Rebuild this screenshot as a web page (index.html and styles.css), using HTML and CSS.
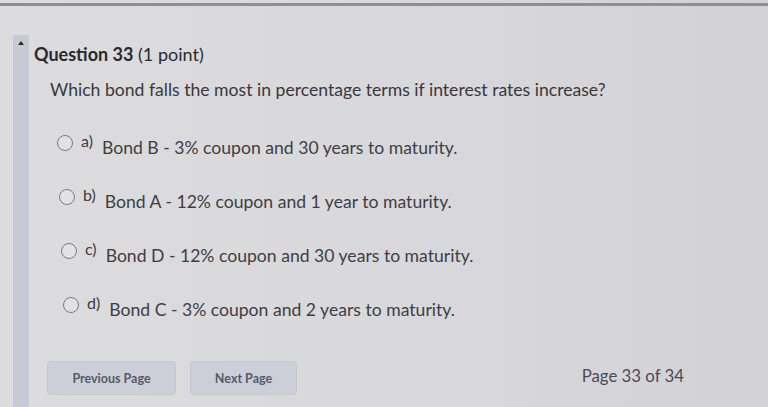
FILE: index.html
```html
<!DOCTYPE html>
<html>
<head>
<meta charset="utf-8">
<link rel="stylesheet" href="styles.css">
</head>
<body>
<div class="screen">
  <div class="topline"></div>
  <div class="main">
    <div class="sidebar"><span class="caret"></span></div>
    <div class="content">
      <h1 class="title"><b>Question 33</b> (1 point)</h1>
      <p class="question">Which bond falls the most in percentage terms if interest rates increase?</p>
      <ul class="options">
        <li class="option"><span class="radio"></span><span class="letter">a)</span><span class="text">Bond B - 3% coupon and 30 years to maturity.</span></li>
        <li class="option"><span class="radio"></span><span class="letter">b)</span><span class="text">Bond A - 12% coupon and 1 year to maturity.</span></li>
        <li class="option"><span class="radio"></span><span class="letter">c)</span><span class="text">Bond D - 12% coupon and 30 years to maturity.</span></li>
        <li class="option"><span class="radio"></span><span class="letter">d)</span><span class="text">Bond C - 3% coupon and 2 years to maturity.</span></li>
      </ul>
      <div class="footer">
        <button class="btn btn-prev">Previous Page</button>
        <button class="btn btn-next">Next Page</button>
        <span class="pager">Page 33 of 34</span>
      </div>
    </div>
  </div>
</div>
</body>
</html>
```
FILE: styles.css
```css
html, body {
  margin: 0;
  padding: 0;
}
body {
  width: 768px;
  height: 407px;
  overflow: hidden;
  background: #d9d9dc;
  font-family: Lato, "Open Sans", sans-serif;
  color: #3a3a3e;
}
.screen {
  height: 407px;
  display: flex;
  flex-direction: column;
  background: linear-gradient(90deg, #dcdcde 0%, #d8d8dc 60%, #d2d2d6 100%);
}
.topline {
  height: 3px;
  margin-top: 3px;
  background: #8e8e93;
  flex: none;
}
.main {
  flex: 1;
  display: flex;
  padding-top: 29px;
}
.sidebar {
  width: 16px;
  margin-left: 13px;
  background: #c8c9d2;
  display: flex;
  justify-content: center;
  padding-top: 6px;
  box-sizing: border-box;
  flex: none;
}
.caret {
  width: 0;
  height: 0;
  border-left: 3px solid transparent;
  border-right: 3px solid transparent;
  border-bottom: 4px solid #2a2a30;
}
.content {
  flex: 1;
  padding-left: 5px;
  padding-right: 40px;
  display: flex;
  flex-direction: column;
}
.title {
  margin: 8px 0 0 0;
  font-size: 18px;
  font-weight: 400;
  color: #2a2a2e;
  line-height: 22px;
}
.title b {
  font-weight: 700;
}
.question {
  margin: 14px 0 0 16px;
  font-size: 17.6px;
  line-height: 22px;
  color: #38383c;
}
.options {
  list-style: none;
  margin: 31px 0 0 23px;
  padding: 0;
  display: flex;
  flex-direction: column;
  gap: 32px;
}
.option {
  display: flex;
  align-items: center;
  height: 22px;
}
.option:nth-child(2) { padding-left: 2px; }
.option:nth-child(3) { padding-left: 4px; }
.option:nth-child(4) { padding-left: 6px; }
.radio {
  width: 14px;
  height: 14px;
  border: 1.7px solid #7a7a80;
  border-radius: 50%;
  background: #e2e2e4;
  flex: none;
}
.letter {
  font-size: 16px;
  margin-left: 8px;
  position: relative;
  top: -3px;
  color: #3c3c40;
}
.text {
  font-size: 17.6px;
  margin-left: 9px;
  position: relative;
  top: 4px;
  color: #3e3e42;
}
.footer {
  margin-top: auto;
  margin-bottom: 12px;
  margin-left: 13px;
  display: flex;
  align-items: center;
  gap: 14px;
}
.btn {
  height: 34px;
  border: 1px solid #c4c6d0;
  border-radius: 4px;
  background: #cdcfd8;
  font-family: Lato, sans-serif;
  font-weight: 700;
  font-size: 12.5px;
  color: #555a68;
  padding: 0;
}
.btn-prev {
  width: 129px;
}
.btn-next {
  width: 107px;
}
.pager {
  margin-left: auto;
  margin-right: 44px;
  font-size: 16.8px;
  color: #4a4a50;
  position: relative;
  top: -3px;
}
```
